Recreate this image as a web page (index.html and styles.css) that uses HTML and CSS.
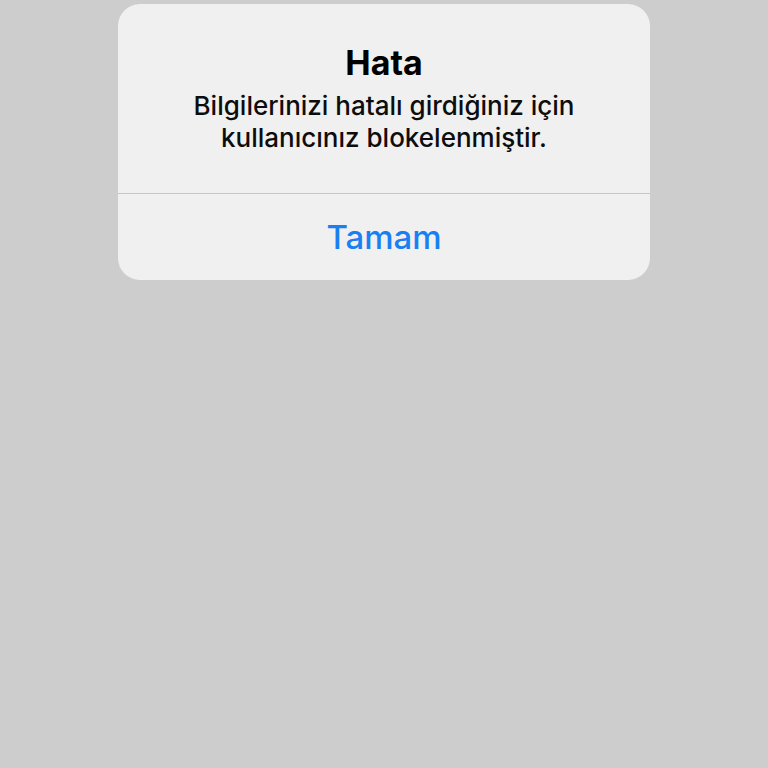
FILE: index.html
```html
<!DOCTYPE html>
<html lang="tr">
<head>
<meta charset="utf-8">
<link rel="stylesheet" href="styles.css">
</head>
<body>
<div class="alert">
  <div class="alert-body">
    <div class="alert-title">Hata</div>
    <div class="alert-message">Bilgilerinizi hatalı girdiğiniz için<br>kullanıcınız blokelenmiştir.</div>
  </div>
  <div class="alert-action">Tamam</div>
</div>
</body>
</html>
```

FILE: styles.css
```css
html, body {
  margin: 0;
  padding: 0;
  background: #cdcdcd;
  height: 100%;
}
body {
  font-family: Inter, "Noto Sans", sans-serif;
  padding-top: 4px;
  box-sizing: border-box;
}
.alert {
  margin-left: 118px;
  width: 532px;
  background: #f0f0f0;
  border-radius: 22px;
  overflow: hidden;
  display: flex;
  flex-direction: column;
}
.alert-body {
  height: 190px;
  box-sizing: border-box;
  padding-top: 40px;
  border-bottom: 1px solid #c6c6c6;
  text-align: center;
  display: flex;
  flex-direction: column;
  align-items: center;
  gap: 8px;
}
.alert-title {
  font-size: 34px;
  line-height: 38px;
  font-weight: 700;
  color: #000;
}
.alert-message {
  font-size: 26px;
  line-height: 32px;
  font-weight: 500;
  color: #0d0d0d;
}
.alert-action {
  height: 86px;
  display: flex;
  align-items: center;
  justify-content: center;
  font-size: 33px;
  line-height: 36px;
  font-weight: 500;
  color: #1a7ff0;
}
```
